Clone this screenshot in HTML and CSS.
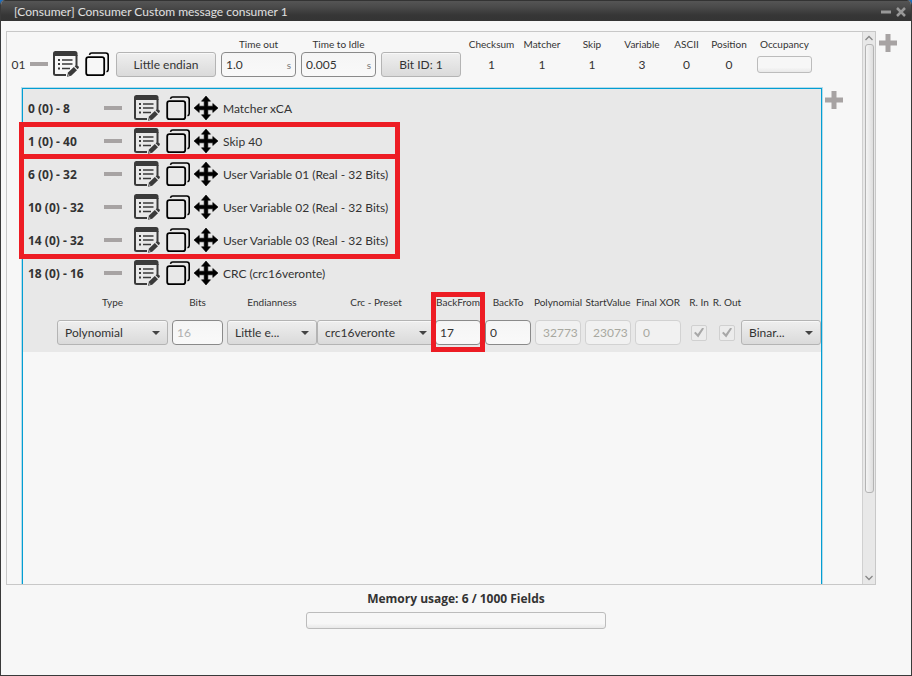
FILE: index.html
```
<!DOCTYPE html>
<html lang="en">
<head>
<meta charset="utf-8">
<title>Consumer Custom message consumer 1</title>
<link rel="stylesheet" href="styles.css">
</head>
<body>
<svg class="sprite" aria-hidden="true">
  <symbol id="edit" viewBox="0 0 26 26">
    <path d="M1 4V22.500Q1 24 2.800 24H13M23.500 4V14" fill="none" stroke="#3a3a3a" stroke-width="2"/>
    <path d="M0 5V2.500Q0 0 2.500 0H22Q24.500 0 24.500 2.500V5Z" fill="#3a3a3a"/>
    <path d="M9 9H19.500M9 13H19.500M9 17.500H17" stroke="#3a3a3a" stroke-width="1.700"/>
    <path d="M5 9H7M5 13H7M5 17.500H7" stroke="#3a3a3a" stroke-width="1.800"/>
    <path d="M14 25.800L15 21.500L20.800 16L24 19.200L18.200 24.800Z" fill="#3a3a3a"/>
    <path d="M21.600 15.200L22.800 14.100Q23.600 13.600 24.400 14.300L25.600 15.600Q26.200 16.400 25.500 17.200L24.600 18.300Z" fill="#3a3a3a"/>
    <circle cx="15.700" cy="24.100" r=".7" fill="#e8e8e8"/>
  </symbol>
  <symbol id="copy" viewBox="0 0 26 26">
    <rect x="1.200" y="6.200" width="18" height="18" rx="2.200" fill="none" stroke="#000" stroke-width="1.800"/>
    <path d="M4.500 3.800Q4.800 2 6.800 2H20.800Q23.200 2 23.200 4.400V18.500Q23.200 20.200 21.500 20.800" fill="none" stroke="#000" stroke-width="1.600"/>
  </symbol>
  <symbol id="move" viewBox="0 0 24 24">
    <path d="M12 0L16.500 5.200H13.800V10.200H18.800V7.500L24 12L18.800 16.500V13.800H13.800V18.800H16.500L12 24L7.500 18.800H10.200V13.800H5.200V16.500L0 12L5.200 7.500V10.200H10.200V5.200H7.500Z" stroke="#000" stroke-width=".6" stroke-linejoin="round"/>
  </symbol>
  <symbol id="plus" viewBox="0 0 20 20">
    <path d="M7.500 1H12.500V7.500H19V12.500H12.500V19H7.500V12.500H1V7.500H7.500Z" fill="#a7a3a3"/>
  </symbol>
</svg>
<div class="window">
  <header class="titlebar">
    <h1>[Consumer] Consumer Custom message consumer 1</h1>
    <button class="plain" aria-label="Minimize"><svg width="10" height="10"><path d="M0 5H10" stroke="#989898" stroke-width="3"/></svg></button>
    <button class="plain" aria-label="Close"><svg width="10" height="10"><path d="M1 1L9 9M9 1L1 9" stroke="#989898" stroke-width="2.500"/></svg></button>
  </header>

  <main class="workspace">
    <section class="pane">
      <div class="content">
        <div class="message">
          <span class="control index">01</span>
          <button class="plain control minus" aria-label="Remove message"></button>
          <button class="plain control" aria-label="Edit message"><svg class="icon"><use href="#edit"/></svg></button>
          <button class="plain control" aria-label="Copy message"><svg class="icon"><use href="#copy"/></svg></button>
          <button class="push endian">Little endian</button>
          <div class="cell timing"><label for="timeout">Time out</label><div class="unit"><input class="text" id="timeout" value="1.0"><span>s</span></div></div>
          <div class="cell timing"><label for="idle">Time to Idle</label><div class="unit"><input class="text" id="idle" value="0.005"><span>s</span></div></div>
          <button class="push bitid">Bit ID: 1</button>
          <dl class="counts">
            <div><dt>Checksum</dt><dd>1</dd></div>
            <div><dt>Matcher</dt><dd>1</dd></div>
            <div><dt>Skip</dt><dd>1</dd></div>
            <div><dt>Variable</dt><dd>3</dd></div>
            <div><dt>ASCII</dt><dd>0</dd></div>
            <div><dt>Position</dt><dd>0</dd></div>
          </dl>
          <div class="cell occupancy"><span>Occupancy</span><div class="control"><div class="meter" role="progressbar" aria-label="Occupancy" aria-valuenow="0"></div></div></div>
        </div>

        <div class="body">
          <div class="list">
            <div class="fields">
              <div class="row"><b>0 (0) - 8</b><button class="plain minus" aria-label="Remove"></button><button class="plain" aria-label="Edit"><svg class="icon"><use href="#edit"/></svg></button><button class="plain" aria-label="Copy"><svg class="icon"><use href="#copy"/></svg></button><svg class="grip"><use href="#move"/></svg><span>Matcher xCA</span></div>
              <div class="row"><b>1 (0) - 40</b><button class="plain minus" aria-label="Remove"></button><button class="plain" aria-label="Edit"><svg class="icon"><use href="#edit"/></svg></button><button class="plain" aria-label="Copy"><svg class="icon"><use href="#copy"/></svg></button><svg class="grip"><use href="#move"/></svg><span>Skip 40</span></div>
              <div class="row"><b>6 (0) - 32</b><button class="plain minus" aria-label="Remove"></button><button class="plain" aria-label="Edit"><svg class="icon"><use href="#edit"/></svg></button><button class="plain" aria-label="Copy"><svg class="icon"><use href="#copy"/></svg></button><svg class="grip"><use href="#move"/></svg><span>User Variable 01 (Real - 32 Bits)</span></div>
              <div class="row"><b>10 (0) - 32</b><button class="plain minus" aria-label="Remove"></button><button class="plain" aria-label="Edit"><svg class="icon"><use href="#edit"/></svg></button><button class="plain" aria-label="Copy"><svg class="icon"><use href="#copy"/></svg></button><svg class="grip"><use href="#move"/></svg><span>User Variable 02 (Real - 32 Bits)</span></div>
              <div class="row"><b>14 (0) - 32</b><button class="plain minus" aria-label="Remove"></button><button class="plain" aria-label="Edit"><svg class="icon"><use href="#edit"/></svg></button><button class="plain" aria-label="Copy"><svg class="icon"><use href="#copy"/></svg></button><svg class="grip"><use href="#move"/></svg><span>User Variable 03 (Real - 32 Bits)</span></div>
              <div class="row"><b>18 (0) - 16</b><button class="plain minus" aria-label="Remove"></button><button class="plain" aria-label="Edit"><svg class="icon"><use href="#edit"/></svg></button><button class="plain" aria-label="Copy"><svg class="icon"><use href="#copy"/></svg></button><svg class="grip"><use href="#move"/></svg><span>CRC (crc16veronte)</span></div>

              <div class="crc">
                <div class="param spaced"><label for="type">Type</label><div class="combo"><select id="type"><option>Polynomial</option></select></div></div>
                <div class="param spaced"><label for="bits">Bits</label><input class="text dim" id="bits" value="16" disabled></div>
                <div class="param"><label for="endianness">Endianness</label><div class="combo"><select id="endianness"><option>Little e...</option></select></div></div>
                <div class="param"><label for="preset">Crc - Preset</label><div class="combo"><select id="preset"><option>crc16veronte</option></select></div></div>
                <div class="param spaced"><label for="from">BackFrom</label><input class="text" id="from" value="17"></div>
                <div class="param spaced"><label for="to">BackTo</label><input class="text" id="to" value="0"></div>
                <div class="param spaced"><label for="poly">Polynomial</label><input class="text off" id="poly" value="32773" disabled></div>
                <div class="param spaced"><label for="start">StartValue</label><input class="text off" id="start" value="23073" disabled></div>
                <div class="param spaced"><label for="xor">Final XOR</label><input class="text off" id="xor" value="0" disabled></div>
                <div class="param"><label for="rin">R. In</label><div class="control"><input type="checkbox" id="rin" checked disabled></div></div>
                <div class="param"><label for="rout">R. Out</label><div class="control"><input type="checkbox" id="rout" checked disabled></div></div>
                <div class="param bare"><div class="combo"><select aria-label="Format"><option>Binar...</option></select></div></div>
              </div>
            </div>
            <div class="mark mark-skip"></div>
            <div class="mark mark-variables"></div>
            <div class="mark mark-from"></div>
          </div>
          <button class="plain add" aria-label="Add field"><svg><use href="#plus"/></svg></button>
        </div>
      </div>
      <div class="scrollbar">
        <svg width="10" height="6"><path d="M1.500 5L5 1.500L8.500 5" fill="none" stroke="#888" stroke-width="1.300"/></svg>
        <div class="track"><div class="thumb"></div></div>
        <svg width="10" height="6"><path d="M1.500 1L5 4.500L8.500 1" fill="none" stroke="#888" stroke-width="1.300"/></svg>
      </div>
    </section>
    <button class="plain add" aria-label="Add message"><svg><use href="#plus"/></svg></button>
  </main>

  <footer class="memory">
    <b>Memory usage: 6 / 1000 Fields</b>
    <div class="meter" role="progressbar" aria-label="Memory usage" aria-valuenow="6" aria-valuemax="1000"></div>
  </footer>
</div>
</body>
</html>
```
FILE: styles.css
```
* { box-sizing: border-box; }
body {
  margin: 0;
  background: #1d6fc0;
  color: #333;
  font: 12px/16px Lato, "Open Sans", sans-serif;
}
b { font-family: "Open Sans", sans-serif; }
.sprite { position: absolute; width: 0; height: 0; }
button, input, select { font: inherit; color: inherit; margin: 0; }
svg { display: block; }
.plain { background: none; border: 0; padding: 0; }
.window {
  display: flex;
  flex-direction: column;
  height: 100vh;
  background: #f7f7f7;
  border: 1px solid #3a3a3a;
  border-top: 0;
  border-radius: 5px 5px 0 0;
  overflow: hidden;
}
.titlebar {
  display: flex;
  align-items: center;
  gap: 5px;
  height: 21px;
  padding: 2px 5px 0 13px;
  background: linear-gradient(#555 0, #4a4a4a 30%, #363636 70%, #343434);
  border-top: 1px solid #333;
}
.titlebar h1 { flex: 1; margin: 0; font-size: 12px; font-weight: 400; color: #e0e0e0; }
.workspace { flex: 1; min-height: 0; display: flex; gap: 2px; padding: 10px 13px 0 5px; }
.pane { flex: 1; min-width: 0; display: flex; border: 1px solid #c8c8c8; overflow: hidden; }
.content { flex: 1; min-width: 0; display: flex; flex-direction: column; padding-left: 5px; }
.message { display: flex; align-items: flex-end; gap: 5px; padding: 5px 0 11px; }
.control { display: flex; align-items: center; justify-content: center; height: 25px; }
.index { width: 13px; }
.minus { width: 18px; flex: none; display: flex; align-items: center; }
.minus::before { content: ""; flex: 1; height: 4px; margin-bottom: 2px; background: #a7a3a3; }
.message .icon { margin-bottom: 2px; }
.message .minus + .control { margin-right: 1px; }
.icon { width: 26px; height: 26px; }
.push, select {
  height: 25px;
  padding: 0;
  border: 1px solid #b4b4b4;
  border-radius: 3px;
  background: linear-gradient(#efefef, #dadada);
  box-shadow: inset 0 1px #f8f8f8;
}
.endian { width: 100px; }
.bitid { width: 80px; }
.cell, .param { display: flex; flex-direction: column; align-items: center; }
.cell > label, .cell > span, dt, .param > label { font-size: 10px; line-height: 15px; white-space: nowrap; }
.timing { width: 75px; }
.unit { display: flex; width: 100%; position: relative; }
.unit span { position: absolute; right: 5px; top: 5px; font-size: 10px; color: #777; }
.text {
  width: 100%;
  min-width: 0;
  height: 25px;
  padding: 0 4px;
  border: 1px solid #8a8a8a;
  border-radius: 4px;
  background: #fff linear-gradient(#f5f5f5, #f9f9f9);
}
.dim { color: #b0b0b0; }
.off { padding: 0 1px 0 7px; color: #a8a8a0; border-color: #d2d2d2; background: #f1f1f1; }
.counts { display: grid; grid-template-columns: 51px 50px 50px 50px 39px 46px; margin: 0; }
.counts div { display: flex; flex-direction: column; align-items: center; }
.counts dd { margin: 0; line-height: 25px; }
.occupancy { width: 55px; }
.occupancy .control { width: 100%; }
.meter {
  width: 100%;
  height: 17px;
  border: 1px solid #bcbcbc;
  border-radius: 3px;
  background: linear-gradient(#f7f7f7 70%, #e8e8e8);
}
.body { flex: 1; min-height: 0; display: flex; gap: 2px; padding: 0 18px 0 10px; }
.list {
  position: relative;
  flex: 1;
  min-width: 0;
  border: 1px solid #039ed3;
  border-bottom: 0;
  box-shadow: 0 0 0 1px #b4dcea;
}
.fields { padding: 3px 0 7px; background: #e8e8e8; }
.row { display: flex; align-items: center; height: 33px; padding-left: 5px; }
.row b { width: 76px; }
.row .minus { margin-right: 12px; }
.row .icon { margin-right: 6px; }
.row .icon, .grip { margin-bottom: 2px; }
.row .plain + .grip { margin-left: -4px; }
.grip { width: 24px; height: 24px; margin-right: 5px; }
.crc {
  display: grid;
  grid-template-columns: 115px 55px 90px 118px repeat(5, 50px) 28px 28px minmax(0, 1fr);
  padding: 5px 0 0 34px;
}
.param { min-width: 0; gap: 10px; }
.spaced { padding-right: 4px; }
.bare { justify-content: flex-end; }
.combo { position: relative; width: 100%; }
.combo::after {
  content: "";
  position: absolute;
  right: 8px;
  top: 11px;
  border: 4px solid transparent;
  border-top-color: #444;
  border-bottom: 0;
  pointer-events: none;
}
select { appearance: none; width: 100%; padding: 0 7px; }
input[type="checkbox"] {
  appearance: none;
  width: 16px;
  height: 16px;
  border: 1px solid #d0d0d0;
  border-radius: 2px;
  background: #ececec;
}
input[type="checkbox"]::before {
  content: "";
  display: block;
  width: 10px;
  height: 10px;
  margin: 2px;
  background: #a8a8a8;
  clip-path: polygon(0 55%, 15% 42%, 38% 66%, 84% 0, 100% 10%, 42% 100%);
}
.mark { position: absolute; border: 5px solid #ed1c24; pointer-events: none; }
.mark-skip { left: -4px; top: 33px; width: 381px; height: 37px; }
.mark-variables { left: -4px; top: 65px; width: 381px; height: 105px; }
.mark-from { left: 408px; top: 203px; width: 54px; height: 60px; }
.add { align-self: flex-start; margin-top: 2px; }
.add svg { width: 20px; height: 20px; }
.scrollbar {
  width: 13px;
  display: flex;
  flex-direction: column;
  align-items: center;
  gap: 3px;
  padding: 3px 0;
  border-left: 1px solid #d0d0d0;
  background: #e8e8e8;
}
.track { flex: 1; width: 9px; }
.thumb {
  height: 85%;
  border: 1px solid #b4b4b4;
  border-radius: 3px;
  background: linear-gradient(90deg, #f4f4f4, #dedede);
}
.memory { display: flex; flex-direction: column; align-items: center; gap: 5px; height: 90px; padding-top: 6px; }
.memory .meter { width: 300px; }
```
